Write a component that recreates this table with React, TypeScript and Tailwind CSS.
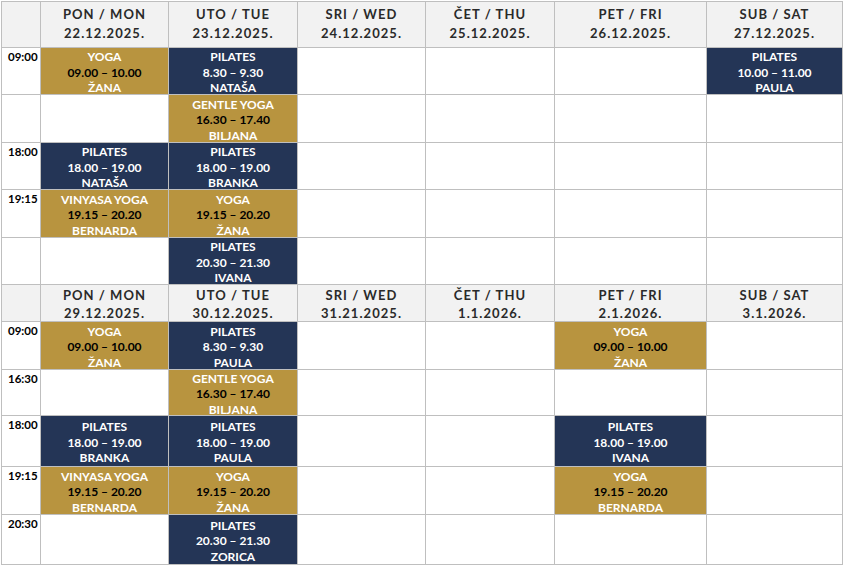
import React from "react";

type Cls = { t: string; time: string; n: string; c: "g" | "b" } | null;

const G = (t: string, time: string, n: string): Cls => ({ t, time, n, c: "g" });
const B = (t: string, time: string, n: string): Cls => ({ t, time, n, c: "b" });

const days1 = [
  ["PON / MON", "22.12.2025."],
  ["UTO / TUE", "23.12.2025."],
  ["SRI / WED", "24.12.2025."],
  ["ČET / THU", "25.12.2025."],
  ["PET / FRI", "26.12.2025."],
  ["SUB / SAT", "27.12.2025."],
];
const days2 = [
  ["PON / MON", "29.12.2025."],
  ["UTO / TUE", "30.12.2025."],
  ["SRI / WED", "31.21.2025."],
  ["ČET / THU", "1.1.2026."],
  ["PET / FRI", "2.1.2026."],
  ["SUB / SAT", "3.1.2026."],
];

const rows1: { time: string; cells: Cls[] }[] = [
  { time: "09:00", cells: [G("YOGA", "09.00 – 10.00", "ŽANA"), B("PILATES", "8.30 – 9.30", "NATAŠA"), null, null, null, B("PILATES", "10.00 – 11.00", "PAULA")] },
  { time: "", cells: [null, G("GENTLE YOGA", "16.30 – 17.40", "BILJANA"), null, null, null, null] },
  { time: "18:00", cells: [B("PILATES", "18.00 – 19.00", "NATAŠA"), B("PILATES", "18.00 – 19.00", "BRANKA"), null, null, null, null] },
  { time: "19:15", cells: [G("VINYASA YOGA", "19.15 – 20.20", "BERNARDA"), G("YOGA", "19.15 – 20.20", "ŽANA"), null, null, null, null] },
  { time: "", cells: [null, B("PILATES", "20.30 – 21.30", "IVANA"), null, null, null, null] },
];
const rows2: { time: string; cells: Cls[] }[] = [
  { time: "09:00", cells: [G("YOGA", "09.00 – 10.00", "ŽANA"), B("PILATES", "8.30 – 9.30", "PAULA"), null, null, G("YOGA", "09.00 – 10.00", "ŽANA"), null] },
  { time: "16:30", cells: [null, G("GENTLE YOGA", "16.30 – 17.40", "BILJANA"), null, null, null, null] },
  { time: "18:00", cells: [B("PILATES", "18.00 – 19.00", "BRANKA"), B("PILATES", "18.00 – 19.00", "PAULA"), null, null, B("PILATES", "18.00 – 19.00", "IVANA"), null] },
  { time: "19:15", cells: [G("VINYASA YOGA", "19.15 – 20.20", "BERNARDA"), G("YOGA", "19.15 – 20.20", "ŽANA"), null, null, G("YOGA", "19.15 – 20.20", "BERNARDA"), null] },
  { time: "20:30", cells: [null, B("PILATES", "20.30 – 21.30", "ZORICA"), null, null, null, null] },
];

function Header({ days, first }: { days: string[][]; first: boolean }) {
  const cls =
    "bg-[#f2f2f2] flex flex-col items-center justify-center text-[13px] font-bold tracking-[0.08em] text-[#2a2a2a] " +
    (first ? "leading-[19px] pb-[1px]" : "leading-[18px] pt-[2px]");
  return (
    <>
      <div className="bg-[#f2f2f2]" />
      {days.map((d, i) => (
        <div key={i} className={cls}>
          <div>{d[0]}</div>
          <div>{d[1]}</div>
        </div>
      ))}
    </>
  );
}

function Cell({ c }: { c: Cls }) {
  if (!c) return <div className="bg-white" />;
  const gold = c.c === "g";
  return (
    <div
      className={
        "flex flex-col items-center justify-center pt-[3px] text-[12px] font-bold leading-[15.5px] " +
        (gold ? "bg-[#b8943f]" : "bg-[#243556]")
      }
    >
      <div className="text-white">{c.t}</div>
      <div className={gold ? "text-black" : "text-white"}>{c.time}</div>
      <div className="text-white">{c.n}</div>
    </div>
  );
}

function Rows({ rows }: { rows: { time: string; cells: Cls[] }[] }) {
  return (
    <>
      {rows.map((r, i) => (
        <React.Fragment key={i}>
          <div className="bg-white pl-[6px] pt-[1px] text-[11.5px] font-bold leading-[16px] text-black">{r.time}</div>
          {r.cells.map((c, j) => (
            <Cell key={j} c={c} />
          ))}
        </React.Fragment>
      ))}
    </>
  );
}

export default function App() {
  return (
    <div className="w-[844px] h-[567px] bg-white" style={{ fontFamily: "Lato, 'Noto Sans', sans-serif" }}>
      <div className="ml-px mt-px w-[842px] grid grid-cols-[38px_127px_128px_127px_128px_151px_135px] grid-rows-[45px_46px_47px_46px_47px_46px_36px_47px_45px_50px_47px_49px] gap-px p-px bg-[#bfbfbf]">
        <Header days={days1} first={true} />
        <Rows rows={rows1} />
        <Header days={days2} first={false} />
        <Rows rows={rows2} />
      </div>
    </div>
  );
}
